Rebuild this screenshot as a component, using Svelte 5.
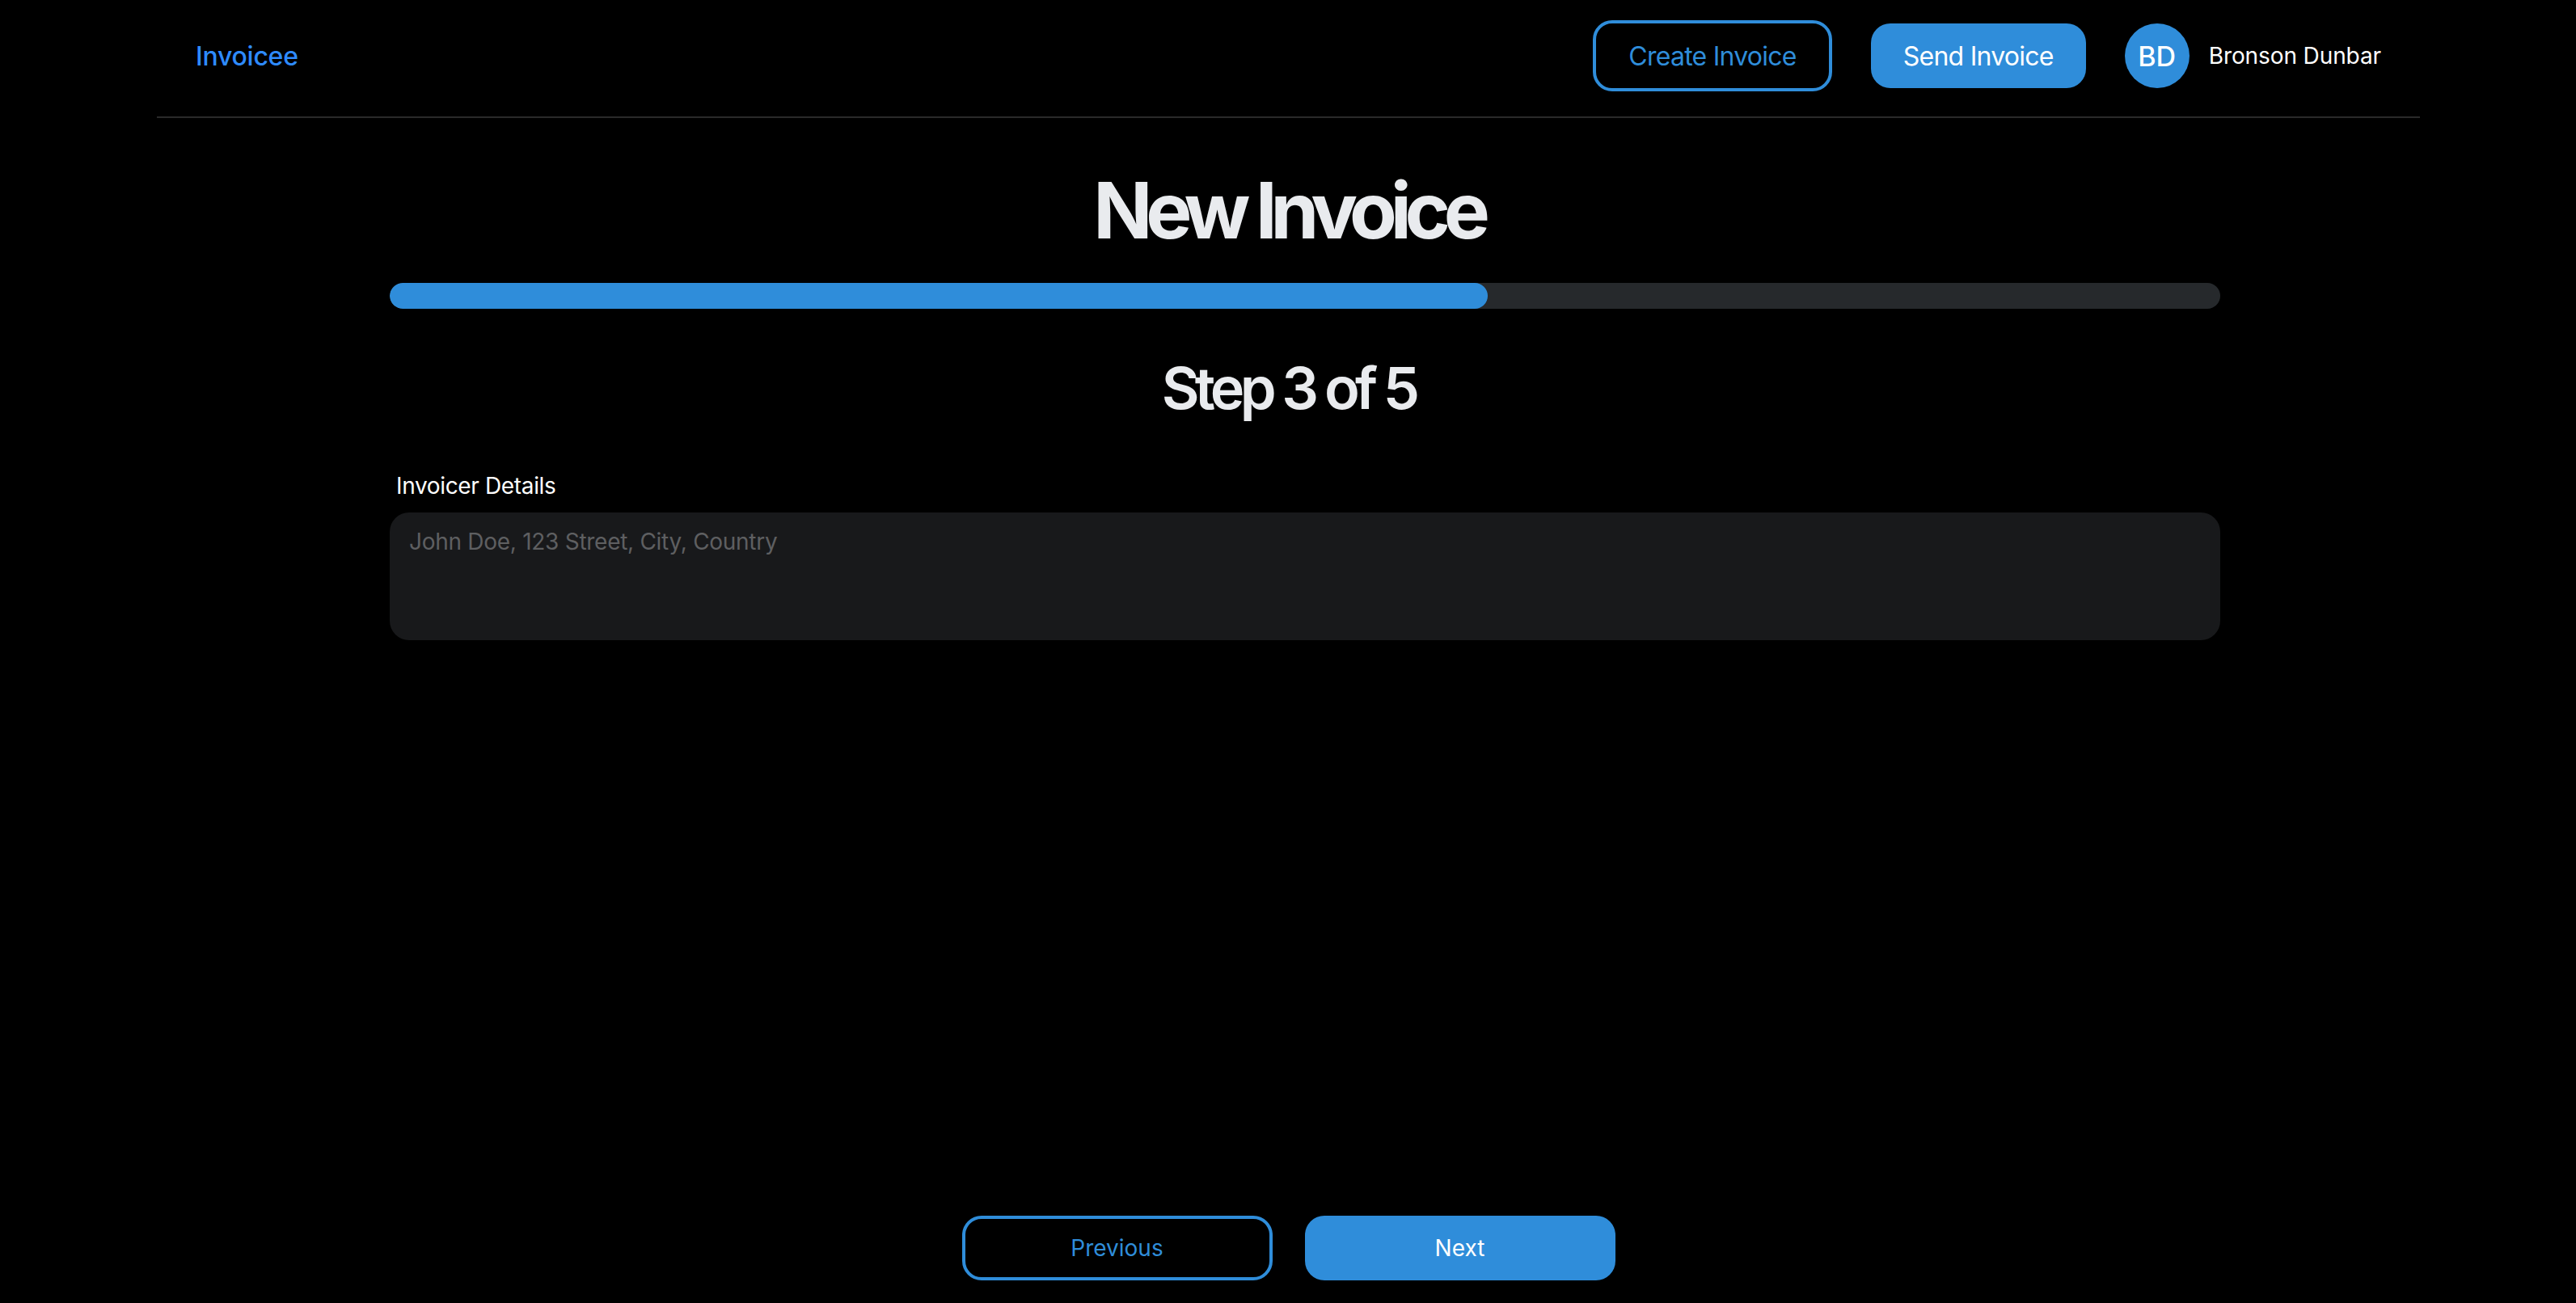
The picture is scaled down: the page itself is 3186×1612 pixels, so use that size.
<script>
  const step = 3;
  const total = 5;
  let details = $state('');
  const progress = $derived((step / total) * 100);
</script>

<div class="page">
  <header class="navbar">
    <a class="brand" href="/">Invoicee</a>
    <div class="actions">
      <button class="btn outline">Create Invoice</button>
      <button class="btn solid">Send Invoice</button>
      <div class="user">
        <span class="avatar">BD</span>
        <span class="name">Bronson Dunbar</span>
      </div>
    </div>
  </header>

  <main class="content">
    <h1>New Invoice</h1>
    <div class="form">
      <div class="track"><div class="fill" style="width: {progress}%"></div></div>
    </div>
    <h2>Step {step} of {total}</h2>
    <div class="form">
      <label for="details">Invoicer Details</label>
      <textarea id="details" placeholder="John Doe, 123 Street, City, Country" bind:value={details}></textarea>
    </div>
  </main>

  <footer class="steps">
    <button class="btn outline wide">Previous</button>
    <button class="btn solid wide">Next</button>
  </footer>
</div>

<style>
  :global(body) {
    background: #000;
  }
  .page {
    display: flex;
    flex-direction: column;
    width: 2799px;
    min-height: 1612px;
    margin-left: 194px;
    box-sizing: border-box;
    font-family: Inter, "Liberation Sans", sans-serif;
    color: #fff;
  }
  .navbar {
    display: flex;
    justify-content: space-between;
    align-items: center;
    height: 146px;
    box-sizing: border-box;
    padding: 0 48px 6px;
    border-bottom: 2px solid #2a2a2a;
  }
  .brand {
    font-size: 32px;
    font-weight: 500;
    letter-spacing: -0.25px;
    color: #2e8bff;
    text-decoration: none;
  }
  .actions {
    display: flex;
    align-items: center;
    gap: 48px;
  }
  .btn {
    box-sizing: border-box;
    height: 80px;
    padding: 0 40px;
    border: none;
    border-radius: 24px;
    font-family: inherit;
    font-size: 32px;
    font-weight: 400;
    letter-spacing: -0.75px;
    cursor: pointer;
  }
  .btn.outline {
    height: 88px;
    border: 4px solid #2f8dda;
    background: transparent;
    color: #2f8dda;
  }
  .btn.solid {
    background: #2f8dda;
    color: #fff;
  }
  .btn.wide {
    width: 384px;
    height: 80px;
    font-size: 28px;
    letter-spacing: 0;
  }
  .user {
    display: flex;
    align-items: center;
    gap: 24px;
  }
  .avatar {
    display: flex;
    align-items: center;
    justify-content: center;
    width: 80px;
    height: 80px;
    border-radius: 50%;
    background: #2f8dda;
    font-size: 34px;
    font-weight: 500;
  }
  .name {
    font-size: 28px;
    font-weight: 400;
    letter-spacing: -0.1px;
  }
  .content {
    display: flex;
    flex-direction: column;
  }
  h1 {
    margin: 58px 0 0;
    font-size: 96px;
    line-height: 112px;
    font-weight: 700;
    letter-spacing: -8.2px;
    text-align: center;
    color: #e9ebee;
  }
  h2 {
    margin: 54px 0 0;
    font-size: 72px;
    line-height: 88px;
    font-weight: 600;
    letter-spacing: -5.7px;
    text-align: center;
    color: #e9ebee;
  }
  .form {
    width: 2264px;
    margin-left: 288px;
  }
  .track {
    height: 32px;
    margin-top: 34px;
    border-radius: 16px;
    overflow: hidden;
    background: #26292c;
  }
  .fill {
    height: 100%;
    border-radius: 16px;
    background: #2f8dda;
  }
  label {
    display: block;
    margin-top: 59px;
    padding-left: 8px;
    font-size: 28px;
    line-height: 36px;
    letter-spacing: -0.35px;
  }
  textarea {
    display: block;
    box-sizing: border-box;
    width: 100%;
    height: 158px;
    margin-top: 15px;
    padding: 18px 24px;
    border: none;
    border-radius: 24px;
    outline: none;
    resize: none;
    background: #18191b;
    font-family: inherit;
    font-size: 28px;
    line-height: 36px;
    letter-spacing: -0.28px;
    color: #fff;
  }
  textarea::placeholder {
    color: #5e5f61;
  }
  .steps {
    display: flex;
    justify-content: center;
    gap: 40px;
    margin-top: auto;
    padding-bottom: 28px;
  }
</style>
